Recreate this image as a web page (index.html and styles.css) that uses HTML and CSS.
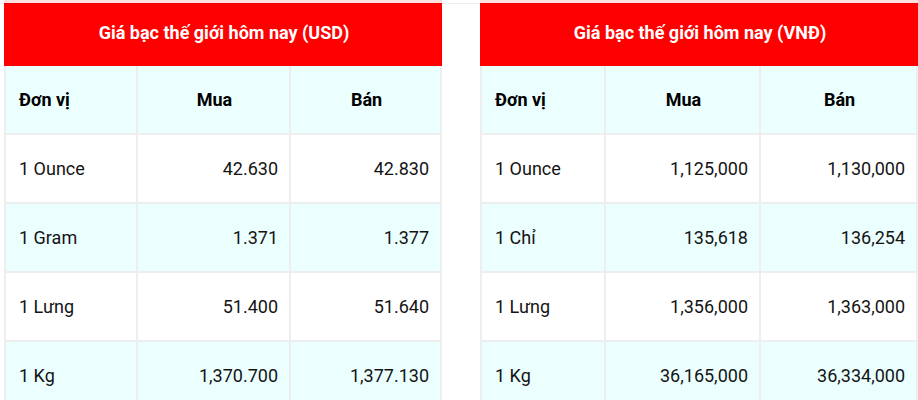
FILE: index.html
```html
<!DOCTYPE html>
<html lang="vi">
<head>
<meta charset="utf-8">
<link rel="stylesheet" href="styles.css">
</head>
<body>
<div class="topfade"></div>
<div class="wrap">
  <table class="price">
    <colgroup><col class="c1a"><col class="c2a"><col class="c3a"></colgroup>
    <thead>
      <tr><th colspan="3" class="title">Giá bạc thế giới hôm nay (USD)</th></tr>
      <tr class="hd"><th class="left">Đơn vị</th><th>Mua</th><th>Bán</th></tr>
    </thead>
    <tbody>
      <tr><td class="left">1 Ounce</td><td>42.630</td><td>42.830</td></tr>
      <tr class="alt"><td class="left">1 Gram</td><td>1.371</td><td>1.377</td></tr>
      <tr><td class="left">1 Lưng</td><td>51.400</td><td>51.640</td></tr>
      <tr class="alt"><td class="left">1 Kg</td><td>1,370.700</td><td>1,377.130</td></tr>
    </tbody>
  </table>
  <table class="price">
    <colgroup><col class="c1b"><col class="c2b"><col class="c3b"></colgroup>
    <thead>
      <tr><th colspan="3" class="title">Giá bạc thế giới hôm nay (VNĐ)</th></tr>
      <tr class="hd"><th class="left">Đơn vị</th><th>Mua</th><th>Bán</th></tr>
    </thead>
    <tbody>
      <tr><td class="left">1 Ounce</td><td>1,125,000</td><td>1,130,000</td></tr>
      <tr class="alt"><td class="left">1 Chỉ</td><td>135,618</td><td>136,254</td></tr>
      <tr><td class="left">1 Lưng</td><td>1,356,000</td><td>1,363,000</td></tr>
      <tr class="alt"><td class="left">1 Kg</td><td>36,165,000</td><td>36,334,000</td></tr>
    </tbody>
  </table>
</div>
</body>
</html>
```
FILE: styles.css
```css
html, body {
  margin: 0;
  padding: 0;
  background: #ffffff;
  font-family: Roboto, "Liberation Sans", Arial, sans-serif;
  color: #111;
}
.topfade {
  position: absolute;
  left: 0;
  top: 0;
  width: 918px;
  height: 3px;
  background: rgba(255, 255, 255, 0.88);
  box-shadow: 0 1px 1px rgba(0, 0, 0, 0.08);
  z-index: 2;
}
.wrap {
  display: flex;
  gap: 38px;
  padding-left: 4px;
}
.price {
  border-collapse: collapse;
  table-layout: fixed;
  width: 436px;
  font-size: 18px;
}
.c1a { width: 132px; }
.c2a { width: 153px; }
.c3a { width: 151px; }
.c1b { width: 124px; }
.c2b { width: 155px; }
.c3b { width: 157px; }
.price th, .price td {
  border: 2px solid #eeeeee;
  height: 69px;
  padding: 0 11px 0 13px;
  box-sizing: border-box;
}
.price td {
  text-align: right;
  font-weight: 400;
  color: #141414;
}
.price .title {
  height: 65px;
  background: #ff0000;
  border-color: #ff0000;
  border-top: 0;
  color: #ffffff;
  font-weight: 700;
  text-align: center;
}
.hd th {
  background: #ebffff;
  font-weight: 700;
  text-align: center;
  color: #000;
}
.price .left {
  text-align: left;
}
.alt td {
  background: #ebffff;
}
```
